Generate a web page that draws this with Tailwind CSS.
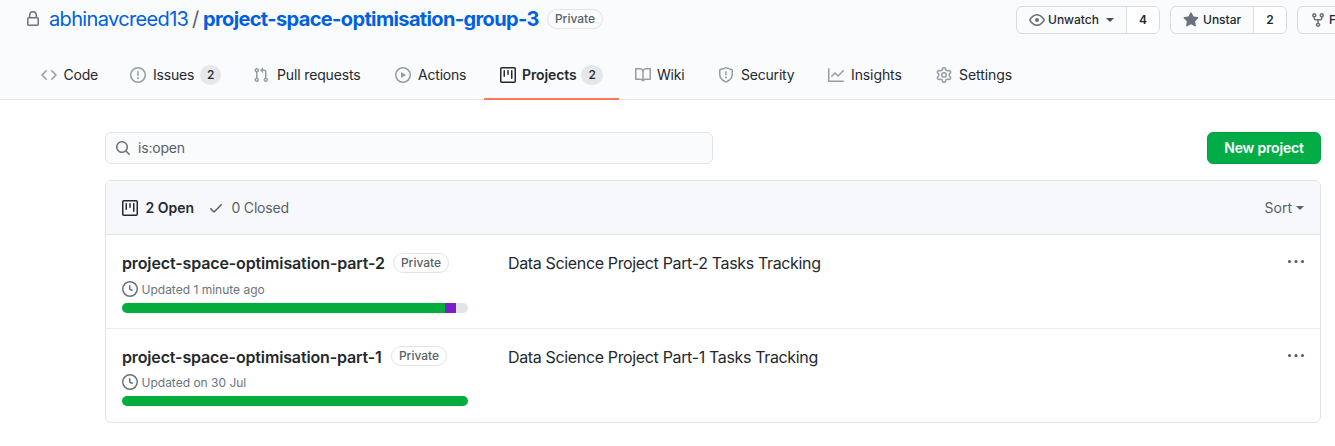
<!DOCTYPE html>
<html lang="en">
<head>
<meta charset="utf-8">
<title>Projects</title>
<script src="https://cdn.jsdelivr.net/npm/@tailwindcss/browser@4"></script>
</head>
<body class="w-[1335px] h-[446px] overflow-hidden bg-white text-[#24292e] font-['Inter','Liberation_Sans',sans-serif] text-sm leading-5 whitespace-nowrap">
<svg class="hidden">
  <symbol id="project" viewBox="0 0 16 16"><path fill-rule="evenodd" d="M1.75 0A1.75 1.75 0 000 1.75v12.5C0 15.216.784 16 1.75 16h12.5A1.75 1.75 0 0016 14.25V1.75A1.75 1.75 0 0014.25 0H1.75zM1.5 1.75a.25.25 0 01.25-.25h12.5a.25.25 0 01.25.25v12.5a.25.25 0 01-.25.25H1.75a.25.25 0 01-.25-.25V1.75zM11.75 3a.75.75 0 00-.75.75v7.5a.75.75 0 001.5 0v-7.5a.75.75 0 00-.75-.75zm-8.25.75a.75.75 0 011.5 0v5.5a.75.75 0 01-1.5 0v-5.5zM8 3a.75.75 0 00-.75.75v3.5a.75.75 0 001.5 0v-3.5A.75.75 0 008 3z"/></symbol>
  <symbol id="clock" viewBox="0 0 16 16"><path fill-rule="evenodd" d="M1.5 8a6.5 6.5 0 1113 0 6.5 6.5 0 01-13 0zM8 0a8 8 0 100 16A8 8 0 008 0zm.5 4.75a.75.75 0 00-1.5 0v3.5a.75.75 0 00.471.696l2.5 1a.75.75 0 00.557-1.392L8.5 7.742V4.75z"/></symbol>
  <symbol id="dots" viewBox="0 0 16 4"><circle cx="1.5" cy="1.5" r="1.5"/><circle cx="8" cy="1.5" r="1.5"/><circle cx="14.5" cy="1.5" r="1.5"/></symbol>
</svg>

<header class="h-[100px] bg-[#fafbfc] border-b border-[#e1e4e8]">
  <div class="flex h-[50px] pl-[25px]">
    <svg class="mt-[11px] size-4 shrink-0 fill-[#6a737d]" viewBox="0 0 16 16"><path fill-rule="evenodd" d="M4 4v2h-.25A1.75 1.75 0 002 7.75v5.5c0 .966.784 1.75 1.75 1.75h8.5A1.75 1.75 0 0014 13.25v-5.5A1.75 1.75 0 0012.25 6H12V4a4 4 0 10-8 0zm6.5 2V4a2.5 2.5 0 00-5 0v2h5zM12 7.5h.25a.25.25 0 01.25.25v5.5a.25.25 0 01-.25.25h-8.5a.25.25 0 01-.25-.25v-5.5a.25.25 0 01.25-.25H12z"/></svg>
    <h1 class="flex ml-2 mt-1 h-[30px] items-center text-xl leading-[30px] text-[#0060e0]">
      <span class="w-[143px] tracking-[-0.65px]">abhinavcreed13</span>
      <span class="w-[11px] text-[#586069]">/</span>
      <span class="w-[344px] font-[650] tracking-[-0.63px]">project-space-optimisation-group-3</span>
    </h1>
    <span class="mt-[9px] flex h-5 w-[56px] items-center justify-center rounded-full border border-[#e1e4e8] text-xs font-medium text-[#586069]">Private</span>
    <div class="ml-auto mt-[6px] flex w-[319px] shrink-0 overflow-hidden text-xs font-medium leading-[18px]">
      <div class="flex h-7 w-[144px] shrink-0 rounded-md border border-[#d9dbdd] overflow-hidden">
        <div class="flex w-[110px] items-center pl-3 border-r border-[#d9dbdd]">
          <svg class="size-4 fill-[#6a737d]" viewBox="0 0 16 16"><path fill-rule="evenodd" d="M1.679 7.932c.412-.621 1.242-1.75 2.366-2.717C5.175 4.242 6.527 3.5 8 3.5c1.473 0 2.824.742 3.955 1.715 1.124.967 1.954 2.096 2.366 2.717a.119.119 0 010 .136c-.412.621-1.242 1.75-2.366 2.717C10.825 11.758 9.473 12.5 8 12.5c-1.473 0-2.824-.742-3.955-1.715C2.92 9.818 2.09 8.69 1.679 8.068a.119.119 0 010-.136zM8 2c-1.981 0-3.67.992-4.933 2.078C1.797 5.169.88 6.423.43 7.1a1.619 1.619 0 000 1.798c.45.678 1.367 1.932 2.637 3.024C4.329 13.008 6.019 14 8 14c1.981 0 3.67-.992 4.933-2.078 1.27-1.091 2.187-2.345 2.637-3.023a1.619 1.619 0 000-1.798c-.45-.678-1.367-1.932-2.637-3.023C11.671 2.992 9.981 2 8 2zm0 8a2 2 0 100-4 2 2 0 000 4z"/></svg>
          <span class="ml-[3px] w-[58px]">Unwatch</span>
          <span class="border-x-4 border-t-4 border-x-transparent border-t-[#444d56]"></span>
        </div>
        <div class="flex flex-1 items-center justify-center bg-white font-semibold">4</div>
      </div>
      <div class="ml-[10px] flex h-7 w-[117px] shrink-0 rounded-md border border-[#d9dbdd] overflow-hidden">
        <div class="flex w-[83px] items-center pl-3 border-r border-[#d9dbdd]">
          <svg class="size-4 fill-[#6a737d]" viewBox="0 0 16 16"><path d="M8 .25a.75.75 0 01.673.418l1.882 3.815 4.21.612a.75.75 0 01.416 1.279l-3.046 2.97.719 4.192a.75.75 0 01-1.088.791L8 12.347l-3.766 1.98a.75.75 0 01-1.088-.79l.72-4.194L.818 6.374a.75.75 0 01.416-1.28l4.21-.611L7.327.668A.75.75 0 018 .25z"/></svg>
          <span class="ml-[4px]">Unstar</span>
        </div>
        <div class="flex flex-1 items-center justify-center bg-white font-semibold">2</div>
      </div>
      <div class="ml-[10px] flex h-7 w-[100px] shrink-0 items-center rounded-md border border-[#d9dbdd] pl-3">
        <svg class="size-4 shrink-0 fill-[#6a737d]" viewBox="0 0 16 16"><path fill-rule="evenodd" d="M5 3.25a.75.75 0 11-1.5 0 .75.75 0 011.5 0zm0 2.122a2.25 2.25 0 10-1.5 0v.878A2.25 2.25 0 005.75 8.5h1.5v2.128a2.251 2.251 0 101.5 0V8.5h1.5a2.25 2.25 0 002.25-2.25v-.878a2.25 2.25 0 10-1.5 0v.878a.75.75 0 01-.75.75h-4.5A.75.75 0 015 6.25v-.878zm3.75 7.378a.75.75 0 11-1.5 0 .75.75 0 011.5 0zm3-8.75a.75.75 0 100-1.5.75.75 0 000 1.5z"/></svg>
        <span class="ml-[3px]">Fork</span>
      </div>
    </div>
  </div>

  <nav class="flex h-[50px] pl-[25px] tracking-[-0.2px] fill-[#959da5]">
    <a class="flex w-[89px] items-center gap-[6.5px] pl-4"><svg class="size-4" viewBox="0 0 16 16"><path fill-rule="evenodd" d="M4.72 3.22a.75.75 0 011.06 1.06L2.06 8l3.72 3.72a.75.75 0 11-1.06 1.06L.47 8.53a.75.75 0 010-1.06l4.25-4.25zm6.56 0a.75.75 0 10-1.06 1.06L13.94 8l-3.72 3.72a.75.75 0 101.06 1.06l4.25-4.25a.75.75 0 000-1.06l-4.25-4.25z"/></svg><span>Code</span></a>
    <a class="flex w-[123px] items-center pl-4"><svg class="size-4" viewBox="0 0 16 16"><path fill-rule="evenodd" d="M8 1.5a6.5 6.5 0 100 13 6.5 6.5 0 000-13zM0 8a8 8 0 1116 0A8 8 0 010 8zm9 3a1 1 0 11-2 0 1 1 0 012 0zm-.25-6.25a.75.75 0 00-1.5 0v3.5a.75.75 0 001.5 0v-3.5z"/></svg><span class="ml-[7px] w-[47px]">Issues</span><span class="flex h-5 w-[21px] items-center justify-center rounded-full bg-[#e5e7ea] text-xs font-medium">2</span></a>
    <a class="flex w-[142px] items-center gap-2 pl-4 tracking-[-0.14px]"><svg class="size-4" viewBox="0 0 16 16"><path fill-rule="evenodd" d="M7.177 3.073L9.573.677A.25.25 0 0110 .854v4.792a.25.25 0 01-.427.177L7.177 3.427a.25.25 0 010-.354zM3.75 2.5a.75.75 0 100 1.5.75.75 0 000-1.5zm-2.25.75a2.25 2.25 0 113 2.122v5.256a2.251 2.251 0 11-1.5 0V5.372A2.25 2.25 0 011.5 3.25zM11 2.5h-1V4h1a1 1 0 011 1v5.628a2.251 2.251 0 101.5 0V5A2.5 2.5 0 0011 2.5zm1 10.25a.75.75 0 111.5 0 .75.75 0 01-1.5 0zM3.75 12a.75.75 0 100 1.5.75.75 0 000-1.5z"/></svg><span>Pull requests</span></a>
    <a class="flex w-[105px] items-center gap-[7px] pl-4"><svg class="size-4" viewBox="0 0 16 16"><path fill-rule="evenodd" d="M1.5 8a6.5 6.5 0 1113 0 6.5 6.5 0 01-13 0zM8 0a8 8 0 100 16A8 8 0 008 0zM6.379 5.227A.25.25 0 006 5.442v5.117a.25.25 0 00.379.214l4.264-2.559a.25.25 0 000-.428L6.379 5.227z"/></svg><span>Actions</span></a>
    <a class="flex w-[135px] items-center border-b-2 border-[#fb7a5f] pl-4 pt-[2px] font-semibold"><svg class="size-4 fill-[#24292e]"><use href="#project"/></svg><span class="ml-[6px] w-[59px] tracking-[-0.1px]">Projects</span><span class="flex h-5 w-[22px] items-center justify-center rounded-full bg-[#e5e7ea] text-xs font-medium">2</span></a>
    <a class="flex w-[83px] items-center gap-[6px] pl-4"><svg class="size-4" viewBox="0 0 16 16"><path fill-rule="evenodd" d="M0 1.75A.75.75 0 01.75 1h4.253c1.227 0 2.317.59 3 1.501A3.744 3.744 0 0111.006 1h4.245a.75.75 0 01.75.75v10.5a.75.75 0 01-.75.75h-4.507a2.25 2.25 0 00-1.591.659l-.622.621a.75.75 0 01-1.06 0l-.622-.621A2.25 2.25 0 005.258 13H.75a.75.75 0 01-.75-.75V1.75zm8.755 3a2.25 2.25 0 012.25-2.25H14.5v9h-3.757c-.71 0-1.4.201-1.992.572l.004-7.322zm-1.504 7.324l.004-5.073-.002-2.253A2.25 2.25 0 005.003 2.5H1.5v9h3.757a3.75 3.75 0 011.994.574z"/></svg><span>Wiki</span></a>
    <a class="flex w-[110px] items-center gap-[7px] pl-4"><svg class="size-4" viewBox="0 0 16 16"><path fill-rule="evenodd" d="M7.467.133a1.75 1.75 0 011.066 0l5.25 1.68A1.75 1.75 0 0115 3.48V7c0 1.566-.32 3.182-1.303 4.682-.983 1.498-2.585 2.813-5.032 3.855a1.7 1.7 0 01-1.33 0c-2.447-1.042-4.049-2.357-5.032-3.855C1.32 10.182 1 8.566 1 7V3.48a1.75 1.75 0 011.217-1.667l5.25-1.68zm.61 1.429a.25.25 0 00-.153 0l-5.25 1.68a.25.25 0 00-.174.238V7c0 1.358.275 2.666 1.057 3.86.784 1.194 2.121 2.34 4.366 3.297a.2.2 0 00.154 0c2.245-.956 3.582-2.104 4.366-3.298C13.225 9.666 13.5 8.36 13.5 7V3.48a.25.25 0 00-.174-.237l-5.25-1.68zM9 10.5a1 1 0 11-2 0 1 1 0 012 0zm-.25-5.75a.75.75 0 10-1.5 0v3a.75.75 0 001.5 0v-3z"/></svg><span>Security</span></a>
    <a class="flex w-[108px] items-center gap-[7px] pl-4 tracking-[-0.1px]"><svg class="size-4" viewBox="0 0 16 16"><path fill-rule="evenodd" d="M1.5 1.75a.75.75 0 00-1.5 0v12.5c0 .414.336.75.75.75h14.5a.75.75 0 000-1.5H1.5V1.75zm14.28 2.53a.75.75 0 00-1.06-1.06L10 7.94 7.53 5.47a.75.75 0 00-1.06 0L3.22 8.72a.75.75 0 001.06 1.06L7 7.06l2.47 2.47a.75.75 0 001.06 0l5.25-5.25z"/></svg><span>Insights</span></a>
    <a class="flex items-center gap-[7px] pl-4 tracking-[-0.05px]"><svg class="size-4" viewBox="0 0 16 16"><path fill-rule="evenodd" d="M7.429 1.525a6.593 6.593 0 011.142 0c.036.003.108.036.137.146l.289 1.105c.147.56.55.967.997 1.189.174.086.341.183.501.29.417.278.97.423 1.53.27l1.102-.303c.11-.03.175.016.195.046.219.31.41.641.573.989.014.031.022.11-.059.19l-.815.806c-.411.406-.562.957-.53 1.456a4.588 4.588 0 010 .582c-.032.499.119 1.05.53 1.456l.815.806c.08.08.073.159.059.19a6.494 6.494 0 01-.573.99c-.02.029-.086.074-.195.045l-1.103-.303c-.559-.153-1.112-.008-1.529.27-.16.107-.327.204-.5.29-.449.222-.851.628-.998 1.189l-.289 1.105c-.029.11-.101.143-.137.146a6.613 6.613 0 01-1.142 0c-.036-.003-.108-.037-.137-.146l-.289-1.105c-.147-.56-.55-.967-.997-1.189a4.502 4.502 0 01-.501-.29c-.417-.278-.97-.423-1.53-.27l-1.102.303c-.11.03-.175-.016-.195-.046a6.492 6.492 0 01-.573-.989c-.014-.031-.022-.11.059-.19l.815-.806c.411-.406.562-.957.53-1.456a4.587 4.587 0 010-.582c.032-.499-.119-1.05-.53-1.456l-.815-.806c-.08-.08-.073-.159-.059-.19a6.44 6.44 0 01.573-.99c.02-.029.086-.075.195-.045l1.103.303c.559.153 1.112.008 1.529-.27.16-.107.327-.204.5-.29.449-.222.851-.628.998-1.189l.289-1.105c.029-.11.101-.143.137-.146zM8 0c-.236 0-.47.01-.701.03-.743.065-1.29.615-1.458 1.261l-.29 1.106c-.017.066-.078.158-.211.224a5.994 5.994 0 00-.668.386c-.123.082-.233.09-.3.071L3.27 2.776c-.644-.177-1.392.02-1.82.63a7.977 7.977 0 00-.704 1.217c-.315.675-.111 1.422.363 1.891l.815.806c.05.048.098.147.088.294a6.084 6.084 0 000 .772c.01.147-.038.246-.088.294l-.815.806c-.474.469-.678 1.216-.363 1.891.2.428.436.835.704 1.218.428.609 1.176.806 1.82.63l1.103-.303c.066-.019.176-.011.299.071.213.143.436.272.668.386.133.066.194.158.212.224l.289 1.106c.169.646.715 1.196 1.458 1.26a8.094 8.094 0 001.402 0c.743-.064 1.29-.614 1.458-1.26l.29-1.106c.017-.066.078-.158.211-.224a5.98 5.98 0 00.668-.386c.123-.082.233-.09.3-.071l1.102.302c.644.177 1.392-.02 1.82-.63.268-.382.505-.789.704-1.217.315-.675.111-1.422-.364-1.891l-.814-.806c-.05-.048-.098-.147-.088-.294a6.1 6.1 0 000-.772c-.01-.147.039-.246.088-.294l.814-.806c.475-.469.679-1.216.364-1.891a7.992 7.992 0 00-.704-1.218c-.428-.609-1.176-.806-1.82-.63l-1.103.303c-.066.019-.176.011-.299-.071a5.991 5.991 0 00-.668-.386c-.133-.066-.194-.158-.212-.224L10.16 1.29C9.99.645 9.444.095 8.701.031A8.094 8.094 0 008 0zm1.5 8a1.5 1.5 0 11-3 0 1.5 1.5 0 013 0zM11 8a3 3 0 11-6 0 3 3 0 016 0z"/></svg><span>Settings</span></a>
  </nav>
</header>

<main class="ml-[105px] w-[1216px] pt-8">
  <div class="flex justify-between">
    <div class="flex h-8 w-[608px] items-center rounded-md border border-[#e1e4e8] bg-[#fafbfc] pl-[9px] text-[#586069]">
      <svg class="size-4 fill-[#6a737d]" viewBox="0 0 16 16"><path fill-rule="evenodd" d="M11.5 7a4.499 4.499 0 11-8.998 0A4.499 4.499 0 0111.5 7zm-.82 4.74a6 6 0 111.06-1.06l3.04 3.04a.75.75 0 11-1.06 1.06l-3.04-3.04z"/></svg>
      <span class="ml-[7px] tracking-[-0.2px]">is:open</span>
    </div>
    <button class="flex h-8 w-[114px] items-center justify-center rounded-md border border-[#0b9c41] bg-[#02ad46] font-semibold tracking-[-0.2px] text-white">New project</button>
  </div>

  <section class="mt-4 h-[243px] rounded-md border border-[#e1e4e8] overflow-hidden">
    <div class="flex h-[54px] items-center border-b border-[#e1e4e8] bg-[#f6f8fc] px-4 text-[#586069]">
      <svg class="size-4 fill-[#24292e]"><use href="#project"/></svg>
      <span class="ml-[7.5px] w-[62.5px] font-semibold text-[#24292e]">2 Open</span>
      <svg class="size-4 fill-[#586069]" viewBox="0 0 16 16"><path fill-rule="evenodd" d="M13.78 4.22a.75.75 0 010 1.06l-7.25 7.25a.75.75 0 01-1.06 0L2.22 9.28a.75.75 0 011.06-1.06L6 10.94l6.72-6.72a.75.75 0 011.06 0z"/></svg>
      <span class="ml-[7.5px] tracking-[-0.2px]">0 Closed</span>
      <span class="ml-auto mr-1">Sort</span>
      <span class="border-x-4 border-t-4 border-x-transparent border-t-[#586069]"></span>
    </div>

    <div class="flex h-[94px] border-b border-[#eaecef] px-4 pt-4">
      <div class="w-[386px]">
        <div class="flex h-6 items-center">
          <h4 class="w-[271px] text-base font-semibold tracking-[-0.13px]">project-space-optimisation-part-2</h4>
          <span class="flex h-5 w-[56px] items-center justify-center rounded-full border border-[#e1e4e8] text-xs font-medium text-[#586069]">Private</span>
        </div>
        <div class="mt-[5px] flex h-[18px] items-center gap-[3.5px] text-xs text-[#6a737d]"><svg class="size-4 fill-[#6a737d]"><use href="#clock"/></svg><span class="pt-[2px]">Updated 1 minute ago</span></div>
        <div class="mt-[5px] flex h-[10px] w-[346px] overflow-hidden rounded-md bg-[#e1e4e8]"><span class="w-[323px] bg-[#02ad3c]"></span><span class="w-[11px] bg-[#7a1ec9]"></span></div>
      </div>
      <p class="text-base leading-6 tracking-[-0.35px]">Data Science Project Part-2 Tasks Tracking</p>
      <svg class="ml-auto mt-[9px] h-1 w-4 fill-[#505a66]"><use href="#dots"/></svg>
    </div>

    <div class="flex h-[93px] px-4 pt-4">
      <div class="w-[386px]">
        <div class="flex h-6 items-center">
          <h4 class="w-[269px] text-base font-semibold tracking-[-0.14px]">project-space-optimisation-part-1</h4>
          <span class="mb-[2px] flex h-5 w-[56px] items-center justify-center rounded-full border border-[#e1e4e8] text-xs font-medium text-[#586069]">Private</span>
        </div>
        <div class="mt-[4px] flex h-[18px] items-center gap-[3.5px] text-xs text-[#6a737d]"><svg class="size-4 fill-[#6a737d]"><use href="#clock"/></svg><span class="pt-[2px]">Updated on 30 Jul</span></div>
        <div class="mt-[5px] h-[10px] w-[346px] rounded-md bg-[#02ad3c]"></div>
      </div>
      <p class="text-base leading-6 tracking-[-0.35px]">Data Science Project Part-1 Tasks Tracking</p>
      <svg class="ml-auto mt-[9px] h-1 w-4 fill-[#505a66]"><use href="#dots"/></svg>
    </div>
  </section>
</main>
</body>
</html>
